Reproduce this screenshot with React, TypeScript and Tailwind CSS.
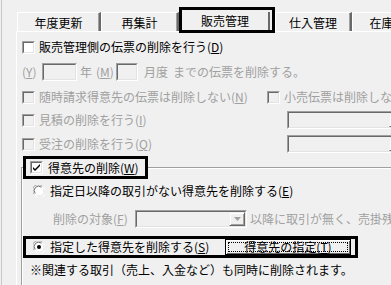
import React from "react";

const DIS = "text-[#a0a0a0]";

function Check({ checked = false, disabled = false }: { checked?: boolean; disabled?: boolean }) {
  return (
    <div className="w-[13px] h-[13px] shrink-0 flex border border-t-[#a0a0a0] border-l-[#a0a0a0] border-r-white border-b-white">
      <div
        className={`flex-1 flex items-center justify-center border border-t-[#696969] border-l-[#696969] border-r-[#e3e3e3] border-b-[#e3e3e3] ${
          disabled ? "bg-[#f0f0f0]" : "bg-white"
        }`}
      >
        {checked && (
          <svg width="9" height="9" viewBox="0 0 9 9">
            <path d="M1 4 L3 6 L8 1 L8 3 L3 8 L1 6 Z" fill="#000" />
          </svg>
        )}
      </div>
    </div>
  );
}

function Radio({ checked = false }: { checked?: boolean }) {
  return (
    <svg width="12" height="12" viewBox="0 0 12 12" className="shrink-0">
      <circle cx="6" cy="6" r="5.5" fill="#fff" />
      <path d="M1.2 9.2 A5.5 5.5 0 0 1 9.2 1.2" stroke="#a0a0a0" strokeWidth="1" fill="none" />
      <path d="M2.2 8.4 A4.4 4.4 0 0 1 8.4 2.2" stroke="#696969" strokeWidth="1" fill="none" />
      <path d="M10.8 2.8 A5.5 5.5 0 0 1 2.8 10.8" stroke="#ffffff" strokeWidth="1" fill="none" />
      <path d="M9.8 3.4 A4.4 4.4 0 0 1 3.4 9.8" stroke="#e3e3e3" strokeWidth="1" fill="none" />
      {checked && <circle cx="6" cy="6" r="2" fill="#000" />}
    </svg>
  );
}

function Field({ w }: { w: string }) {
  return (
    <div className={`${w} h-[18px] shrink-0 flex border border-t-[#a0a0a0] border-l-[#a0a0a0] border-r-white border-b-white`}>
      <div className="flex-1 border border-t-[#696969] border-l-[#696969] border-r-[#e3e3e3] border-b-[#e3e3e3] bg-[#f0f0f0]" />
    </div>
  );
}

function Combo({ w }: { w: string }) {
  return (
    <div className={`${w} h-[18px] shrink-0 flex border border-t-[#a0a0a0] border-l-[#a0a0a0] border-r-white border-b-white`}>
      <div className="flex-1 flex justify-end border border-t-[#696969] border-l-[#696969] border-r-[#e3e3e3] border-b-[#e3e3e3] bg-[#f0f0f0]">
        <div className="w-[16px] h-full flex items-center justify-center border border-t-[#f0f0f0] border-l-[#f0f0f0] border-r-[#696969] border-b-[#696969] bg-[#f0f0f0] shadow-[inset_1px_1px_0_#fff,inset_-1px_-1px_0_#a0a0a0]">
          <svg width="7" height="4" viewBox="0 0 7 4">
            <path d="M0 0 H7 L3.5 4 Z" fill="#a0a0a0" />
          </svg>
        </div>
      </div>
    </div>
  );
}

function Tab({ label, w }: { label: string; w: string }) {
  return (
    <div
      className={`${w} h-[19px] shrink-0 flex items-center justify-center border-t border-l border-t-white border-l-white border-r-2 border-r-[#696969] shadow-[inset_-1px_0_0_#a0a0a0] whitespace-nowrap`}
    >
      <span className="pt-[1px]">{label}</span>
    </div>
  );
}

export default function App() {
  return (
    <div className="w-[391px] h-[285px] overflow-hidden bg-[#f0f0f0] pl-px font-['MS_UI_Gothic','Noto_Sans_CJK_JP',sans-serif] text-[12px] leading-[14px] text-black">
      <div className="h-full border-l border-[#c8c8c8] flex flex-col">
        {/* tab strip */}
        <div className="flex items-end pl-[15px] h-[31px]">
          <Tab label="年度更新" w="w-[84px]" />
          <Tab label="再集計" w="w-[78px]" />
          <div className="relative z-10 -mb-[2px] w-[96px] h-[26px] shrink-0 border-[3px] border-black bg-[#f0f0f0] flex">
            <div className="flex-1 flex justify-center pt-[2px] border-r-2 border-r-[#696969] mr-[2px] mt-[2px]">
              <span>販売管理</span>
            </div>
          </div>
          <Tab label="仕入管理" w="w-[77px]" />
          <Tab label="在庫管理" w="w-[84px]" />
        </div>

        {/* panel */}
        <div className="ml-[14px] flex-1 border-t border-l border-white flex flex-col pl-[5px] pt-[5px]">
          <div className="h-[20px] flex items-center gap-[4px]">
            <Check />
            <span>
              販売管理側の伝票の削除を行う(<u>D</u>)
            </span>
          </div>

          <div className={`mt-[5px] h-[20px] flex items-center ${DIS} whitespace-nowrap`}>
            <span className="w-[20px]">
              (<u>Y</u>)
            </span>
            <Field w="w-[35px]" />
            <span className="ml-[3px] w-[16px]">年</span>
            <span className="w-[20px]">
              (<u>M</u>)
            </span>
            <Field w="w-[22px]" />
            <span className="ml-[6px]">月度</span>
            <span className="ml-[5px]">までの伝票を削除する。</span>
          </div>

          <div className={`mt-[5px] h-[20px] flex items-center ${DIS} whitespace-nowrap`}>
            <div className="w-[245px] shrink-0 flex items-center gap-[4px]">
              <Check disabled />
              <span>
                随時請求得意先の伝票は削除しない(<u>N</u>)
              </span>
            </div>
            <div className="flex items-center gap-[4px]">
              <Check disabled />
              <span>小売伝票は削除しない</span>
            </div>
          </div>

          <div className={`mt-[4px] h-[18px] flex items-center ${DIS} whitespace-nowrap`}>
            <div className="w-[265px] shrink-0 flex items-center gap-[4px]">
              <Check disabled />
              <span>
                見積の削除を行う(<u>I</u>)
              </span>
            </div>
            <Combo w="w-[120px]" />
          </div>

          <div className={`mt-[6px] h-[18px] flex items-center ${DIS} whitespace-nowrap`}>
            <div className="w-[265px] shrink-0 flex items-center gap-[4px]">
              <Check disabled />
              <span>
                受注の削除を行う(<u>Q</u>)
              </span>
            </div>
            <Combo w="w-[120px]" />
          </div>

          {/* group box */}
          <div className="mt-[14px] -ml-[1px] flex-1 border-t border-l border-[#a0a0a0] shadow-[inset_1px_1px_0_#fff] flex flex-col">
            <div className="relative -mt-[12px] ml-px w-[125px] h-[23px] border-[3px] border-black bg-[#f0f0f0] flex items-center pl-[4px] gap-[5px]">
              <Check checked />
              <span>
                得意先の削除(<u>W</u>)
              </span>
            </div>

            <div className="mt-[3px] h-[18px] flex items-center pl-[11px] gap-[5px] whitespace-nowrap">
              <Radio />
              <span>
                指定日以降の取引がない得意先を削除する(<u>E</u>)
              </span>
            </div>

            <div className={`mt-[10px] h-[18px] flex items-center pl-[31px] ${DIS} whitespace-nowrap`}>
              <span className="w-[82px] shrink-0">
                削除の対象(<u>F</u>)
              </span>
              <Combo w="w-[112px]" />
              <span className="ml-[3px]">以降に取引が無く、売掛残</span>
            </div>

            <div className="mt-[8px] ml-px w-[335px] h-[22px] shrink-0 border-[3px] border-black flex items-center pl-[7px] whitespace-nowrap">
              <Radio checked />
              <span className="ml-[5px] w-[175px] shrink-0">
                指定した得意先を削除する(<u>S</u>)
              </span>
              <div className="w-[126px] h-[16px] shrink-0 border border-black flex">
                <div className="flex-1 flex p-[2px] bg-[#f0f0f0] shadow-[inset_1px_1px_0_#fff,inset_-1px_-1px_0_#696969]">
                  <div className="flex-1 flex items-center justify-center border border-dotted border-black leading-[10px]">
                    <span>
                      得意先の指定(<u>T</u>)
                    </span>
                  </div>
                </div>
              </div>
            </div>

            <div className="mt-[5px] pl-[8px] whitespace-nowrap">※関連する取引（売上、入金など）も同時に削除されます。</div>
          </div>
        </div>
      </div>
    </div>
  );
}
